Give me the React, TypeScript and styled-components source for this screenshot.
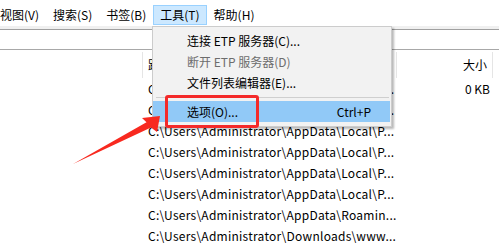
import React from 'react';
import styled, { createGlobalStyle } from 'styled-components';

const GlobalStyle = createGlobalStyle`
  html, body {
    margin: 0;
    padding: 0;
    background: #ffffff;
  }
  body {
    font-family: "Noto Sans CJK SC", "Microsoft YaHei", sans-serif;
    font-size: 12px;
    color: #000;
  }
`;

const menuItems = [
  { label: '视图(V)' },
  { label: '搜索(S)' },
  { label: '书签(B)' },
  { label: '工具(T)', active: true },
  { label: '帮助(H)' },
];

const dropItems = [
  { label: '连接 ETP 服务器(C)...' },
  { label: '断开 ETP 服务器(D)', disabled: true },
  { label: '文件列表编辑器(E)...' },
  { separator: true },
  { label: '选项(O)...', shortcut: 'Ctrl+P', hover: true },
];

const rows = [
  { path: 'C:\\Users\\Administrator\\AppData\\Local\\P...', size: '0 KB' },
  { path: 'C:\\Users\\Administrator\\AppData\\Local\\P...', size: '' },
  { path: 'C:\\Users\\Administrator\\AppData\\Local\\P...', size: '' },
  { path: 'C:\\Users\\Administrator\\AppData\\Local\\P...', size: '' },
  { path: 'C:\\Users\\Administrator\\AppData\\Local\\P...', size: '' },
  { path: 'C:\\Users\\Administrator\\AppData\\Local\\P...', size: '' },
  { path: 'C:\\Users\\Administrator\\AppData\\Roamin...', size: '' },
  { path: 'C:\\Users\\Administrator\\Downloads\\www...', size: '' },
];

const Window = styled.div`
  position: relative;
  width: 499px;
  height: 244px;
  overflow: hidden;
  background: #fff;
`;

const MenuBar = styled.div`
  display: flex;
  height: 26px;
  align-items: center;
  margin-left: -7px;
  background: #fff;
`;

const MenuBarItem = styled.div<{ $active?: boolean }>`
  height: 18px;
  line-height: 18px;
  padding: 0 6px;
  border: 1px solid ${(p) => (p.$active ? '#99d1ff' : 'transparent')};
  background: ${(p) => (p.$active ? '#cce8ff' : 'transparent')};
  white-space: nowrap;
  margin-top: 4px;
`;

const Band = styled.div`
  height: 3px;
  background: #f0f0f0;
  border-bottom: 1px solid #a0a0a0;
`;

const Toolbar = styled.div`
  height: 19px;
  border-bottom: 1px solid #a8a8a8;
`;

const Columns = `143px 254px 96px 1fr`;

const HeaderRow = styled.div`
  display: grid;
  grid-template-columns: ${Columns};
  height: 28px;
`;

const HeaderCell = styled.div<{ $right?: boolean }>`
  border-right: 1px solid #e5e5e5;
  margin-top: 2px;
  padding: 0 5px;
  line-height: 26px;
  text-align: ${(p) => (p.$right ? 'right' : 'left')};
  white-space: nowrap;
  overflow: hidden;
  &:last-child {
    border-right: none;
  }
`;

const Row = styled.div`
  display: grid;
  grid-template-columns: ${Columns};
  height: 21px;
  line-height: 21px;
`;

const Cell = styled.div<{ $right?: boolean }>`
  padding: 0 ${(p) => (p.$right ? '3px' : '5px')};
  text-align: ${(p) => (p.$right ? 'right' : 'left')};
  letter-spacing: ${(p) => (p.$right ? '0' : '0.25px')};
  white-space: nowrap;
  overflow: hidden;
`;

const DropMenu = styled.div`
  position: absolute;
  left: 152px;
  top: 26px;
  width: 237px;
  padding: 3px 1px 4px 0;
  background: #f2f2f2;
  border: 1px solid #cccccc;
  box-shadow: 2px 2px 2px rgba(0, 0, 0, 0.28);
`;

const DropItem = styled.div<{ $disabled?: boolean; $hover?: boolean }>`
  display: flex;
  height: 21px;
  line-height: 21px;
  padding: 0 19px 0 34px;
  color: ${(p) => (p.$disabled ? '#6d6d6d' : '#000')};
  background: ${(p) => (p.$hover ? '#91c9f7' : 'transparent')};
  white-space: nowrap;
`;

const Shortcut = styled.span`
  margin-left: auto;
`;

const Separator = styled.div`
  height: 1px;
  margin: 4px 1px 3px 3px;
  background: #cfcfcf;
`;

const RedBox = styled.div`
  position: absolute;
  left: 165px;
  top: 95px;
  width: 88px;
  height: 27px;
  border: 3px solid #f42a2a;
  border-radius: 3px;
`;

const ArrowSvg = styled.svg`
  position: absolute;
  left: 0;
  top: 0;
  pointer-events: none;
`;

const App: React.FC = () => {
  return (
    <>
      <GlobalStyle />
      <Window>
        <MenuBar>
          {menuItems.map((m) => (
            <MenuBarItem key={m.label} $active={m.active}>
              {m.label}
            </MenuBarItem>
          ))}
        </MenuBar>
        <Band />
        <Toolbar />
        <HeaderRow>
          <HeaderCell />
          <HeaderCell>路径</HeaderCell>
          <HeaderCell $right>大小</HeaderCell>
          <HeaderCell />
        </HeaderRow>
        {rows.map((r, i) => (
          <Row key={i}>
            <Cell />
            <Cell>{r.path}</Cell>
            <Cell $right>{r.size}</Cell>
            <Cell />
          </Row>
        ))}

        <DropMenu>
          {dropItems.map((d, i) =>
            d.separator ? (
              <Separator key={i} />
            ) : (
              <DropItem key={i} $disabled={d.disabled} $hover={d.hover}>
                <span>{d.label}</span>
                {d.shortcut && <Shortcut>{d.shortcut}</Shortcut>}
              </DropItem>
            )
          )}
        </DropMenu>

        <RedBox />

        <ArrowSvg width="499" height="244" viewBox="0 0 499 244">
          <polygon
            points="73,164 146.5,122.2 142,118 160,116 157,132 151,127.6"
            fill="#f8291f"
          />
        </ArrowSvg>
      </Window>
    </>
  );
};

export default App;
